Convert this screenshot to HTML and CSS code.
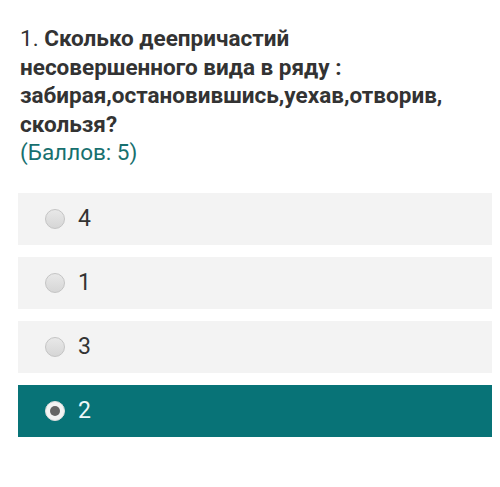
FILE: index.html
```html
<!DOCTYPE html>
<html lang="ru">
<head>
    <meta charset="UTF-8">
    <meta name="viewport" content="width=device-width, initial-scale=1.0">
    <title>Вопрос 1</title>
    <link rel="stylesheet" href="styles.css">
</head>
<body>

<div class="quiz">
    <div class="question">
        <span class="num">1.</span> <b>Сколько деепричастий<br>несовершенного вида в ряду :<br>забирая,остановившись,уехав,отворив,<br>скользя?</b><br>
        <span class="points">(Баллов: 5)</span>
    </div>

    <div class="answers">
        <label class="answer">
            <span class="radio"></span>
            <span class="text">4</span>
        </label>
        <label class="answer">
            <span class="radio"></span>
            <span class="text">1</span>
        </label>
        <label class="answer">
            <span class="radio"></span>
            <span class="text">3</span>
        </label>
        <label class="answer selected">
            <span class="radio"></span>
            <span class="text">2</span>
        </label>
    </div>
</div>

</body>
</html>
```

FILE: styles.css
```css
body {
    margin: 0;
    background-color: #fff;
    font-family: Roboto, "Noto Sans", Arial, sans-serif;
    color: #333;
}
.quiz {
    width: 474px;
    padding: 24px 0 0 18px;
}
.question {
    padding-left: 2px;
    font-size: 22.5px;
    line-height: 28.5px;
}
.question b {
    font-weight: bold;
}
.points {
    color: #17706f;
}
.answers {
    display: flex;
    flex-direction: column;
    gap: 12px;
    margin-top: 26px;
}
.answer {
    display: flex;
    align-items: center;
    height: 52px;
    padding-left: 27px;
    background-color: #f3f3f3;
    font-size: 23px;
}
.radio {
    width: 18px;
    height: 18px;
    border: 1px solid #c4c4c4;
    border-radius: 50%;
    background: linear-gradient(#e8e8e8, #d6d6d6);
    margin-right: 13px;
    box-sizing: content-box;
}
.answer.selected {
    background-color: #087377;
    color: #eef8f8;
}
.answer.selected .radio {
    position: relative;
    border-color: #ddd;
    background: #f4f4f4;
}
.answer.selected .radio::after {
    content: "";
    position: absolute;
    left: 4px;
    top: 4px;
    width: 10px;
    height: 10px;
    border-radius: 50%;
    background-color: #666;
}
```
